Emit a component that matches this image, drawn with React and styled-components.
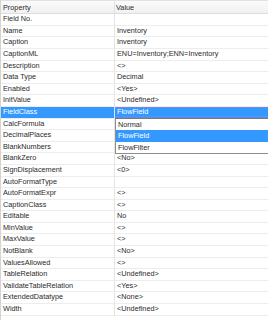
import styled, { createGlobalStyle } from "styled-components";

const GlobalStyle = createGlobalStyle`
  html, body {
    margin: 0;
    padding: 0;
    background: #ffffff;
  }
  body {
    font-family: "Liberation Sans", Arial, sans-serif;
    font-size: 7.3px;
    color: #2b2b2b;
  }
`;

const ROW = 11.6;
const NAME_W = 115;

const properties = [
  { name: "Field No.", value: "" },
  { name: "Name", value: "Inventory" },
  { name: "Caption", value: "Inventory" },
  { name: "CaptionML", value: "ENU=Inventory;ENN=Inventory" },
  { name: "Description", value: "<>" },
  { name: "Data Type", value: "Decimal" },
  { name: "Enabled", value: "<Yes>" },
  { name: "InitValue", value: "<Undefined>" },
  { name: "FieldClass", value: "FlowField", selected: true },
  { name: "CalcFormula", value: "" },
  { name: "DecimalPlaces", value: "" },
  { name: "BlankNumbers", value: "" },
  { name: "BlankZero", value: "<No>" },
  { name: "SignDisplacement", value: "<0>" },
  { name: "AutoFormatType", value: "" },
  { name: "AutoFormatExpr", value: "<>" },
  { name: "CaptionClass", value: "<>" },
  { name: "Editable", value: "No" },
  { name: "MinValue", value: "<>" },
  { name: "MaxValue", value: "<>" },
  { name: "NotBlank", value: "<No>" },
  { name: "ValuesAllowed", value: "<>" },
  { name: "TableRelation", value: "<Undefined>" },
  { name: "ValidateTableRelation", value: "<Yes>" },
  { name: "ExtendedDatatype", value: "<None>" },
  { name: "Width", value: "<Undefined>" },
];

const options = ["Normal", "FlowField", "FlowFilter"];

const App = () => {
  return (
    <>
      <GlobalStyle />
      <Grid>
        <Header>
          <HeaderCell $w={NAME_W}>Property</HeaderCell>
          <HeaderCell>Value</HeaderCell>
        </Header>
        {properties.map((p) => (
          <Row key={p.name}>
            <NameCell $selected={p.selected}>{p.name}</NameCell>
            {p.selected ? (
              <Combo>
                <ComboText>{p.value}</ComboText>
              </Combo>
            ) : (
              <ValueCell>{p.value}</ValueCell>
            )}
            {p.selected && (
              <DropList>
                {options.map((o) => (
                  <Option key={o} $active={o === p.value}>
                    {o}
                  </Option>
                ))}
              </DropList>
            )}
          </Row>
        ))}
      </Grid>
    </>
  );
};

const Grid = styled.div`
  width: 268px;
  height: 320px;
  overflow: hidden;
  border-left: 1px solid #d4d4d4;
  box-sizing: border-box;
`;

const Header = styled.div`
  display: flex;
  height: 14.2px;
  background: linear-gradient(#fbfbfb, #f1f1f1);
  border-top: 1px solid #e2e2e2;
  border-bottom: 1px solid #dedede;
  box-sizing: border-box;
`;

const HeaderCell = styled.div`
  width: ${(p) => (p.$w ? `${p.$w - 1}px` : "auto")};
  flex: ${(p) => (p.$w ? "none" : "1")};
  padding-left: ${(p) => (p.$w ? "2px" : "1px")};
  line-height: 13px;
  border-right: ${(p) => (p.$w ? "1px solid #e0e0e0" : "none")};
  box-sizing: border-box;
  white-space: nowrap;
`;

const Row = styled.div`
  position: relative;
  display: flex;
  height: ${ROW}px;
`;

const NameCell = styled.div`
  width: ${NAME_W - 1}px;
  flex: none;
  padding-left: 2px;
  line-height: ${ROW - 1}px;
  box-sizing: border-box;
  white-space: nowrap;
  overflow: hidden;
  border-right: 1px solid #e4e4e4;
  border-bottom: 1px solid #ededed;
  background: ${(p) => (p.$selected ? "#3399ff" : "transparent")};
  color: ${(p) => (p.$selected ? "#ffffff" : "inherit")};
`;

const ValueCell = styled.div`
  flex: 1;
  padding-left: 2px;
  line-height: ${ROW - 1}px;
  border-bottom: 1px solid #ededed;
  white-space: nowrap;
`;

const Combo = styled.div`
  flex: 1;
  background: #3399ff;
  border-bottom: 1px solid #7a7a7a;
  box-sizing: border-box;
  padding: 0.5px 0 0 1px;
`;

const ComboText = styled.div`
  height: ${ROW - 2.5}px;
  line-height: ${ROW - 3}px;
  padding-left: 1px;
  color: #ffffff;
  border-top: 1px dotted #b277d6;
  border-bottom: 1px dotted #b277d6;
  box-sizing: border-box;
`;

const DropList = styled.div`
  position: absolute;
  top: 100%;
  left: ${NAME_W - 1}px;
  right: 0;
  background: #ffffff;
  border-left: 1px solid #8e8e8e;
  border-bottom: 1px solid #8e8e8e;
  z-index: 2;
`;

const Option = styled.div`
  height: ${ROW}px;
  line-height: ${ROW}px;
  padding-left: 2px;
  background: ${(p) => (p.$active ? "#3399ff" : "#ffffff")};
  color: ${(p) => (p.$active ? "#ffffff" : "inherit")};
`;

export default App;
